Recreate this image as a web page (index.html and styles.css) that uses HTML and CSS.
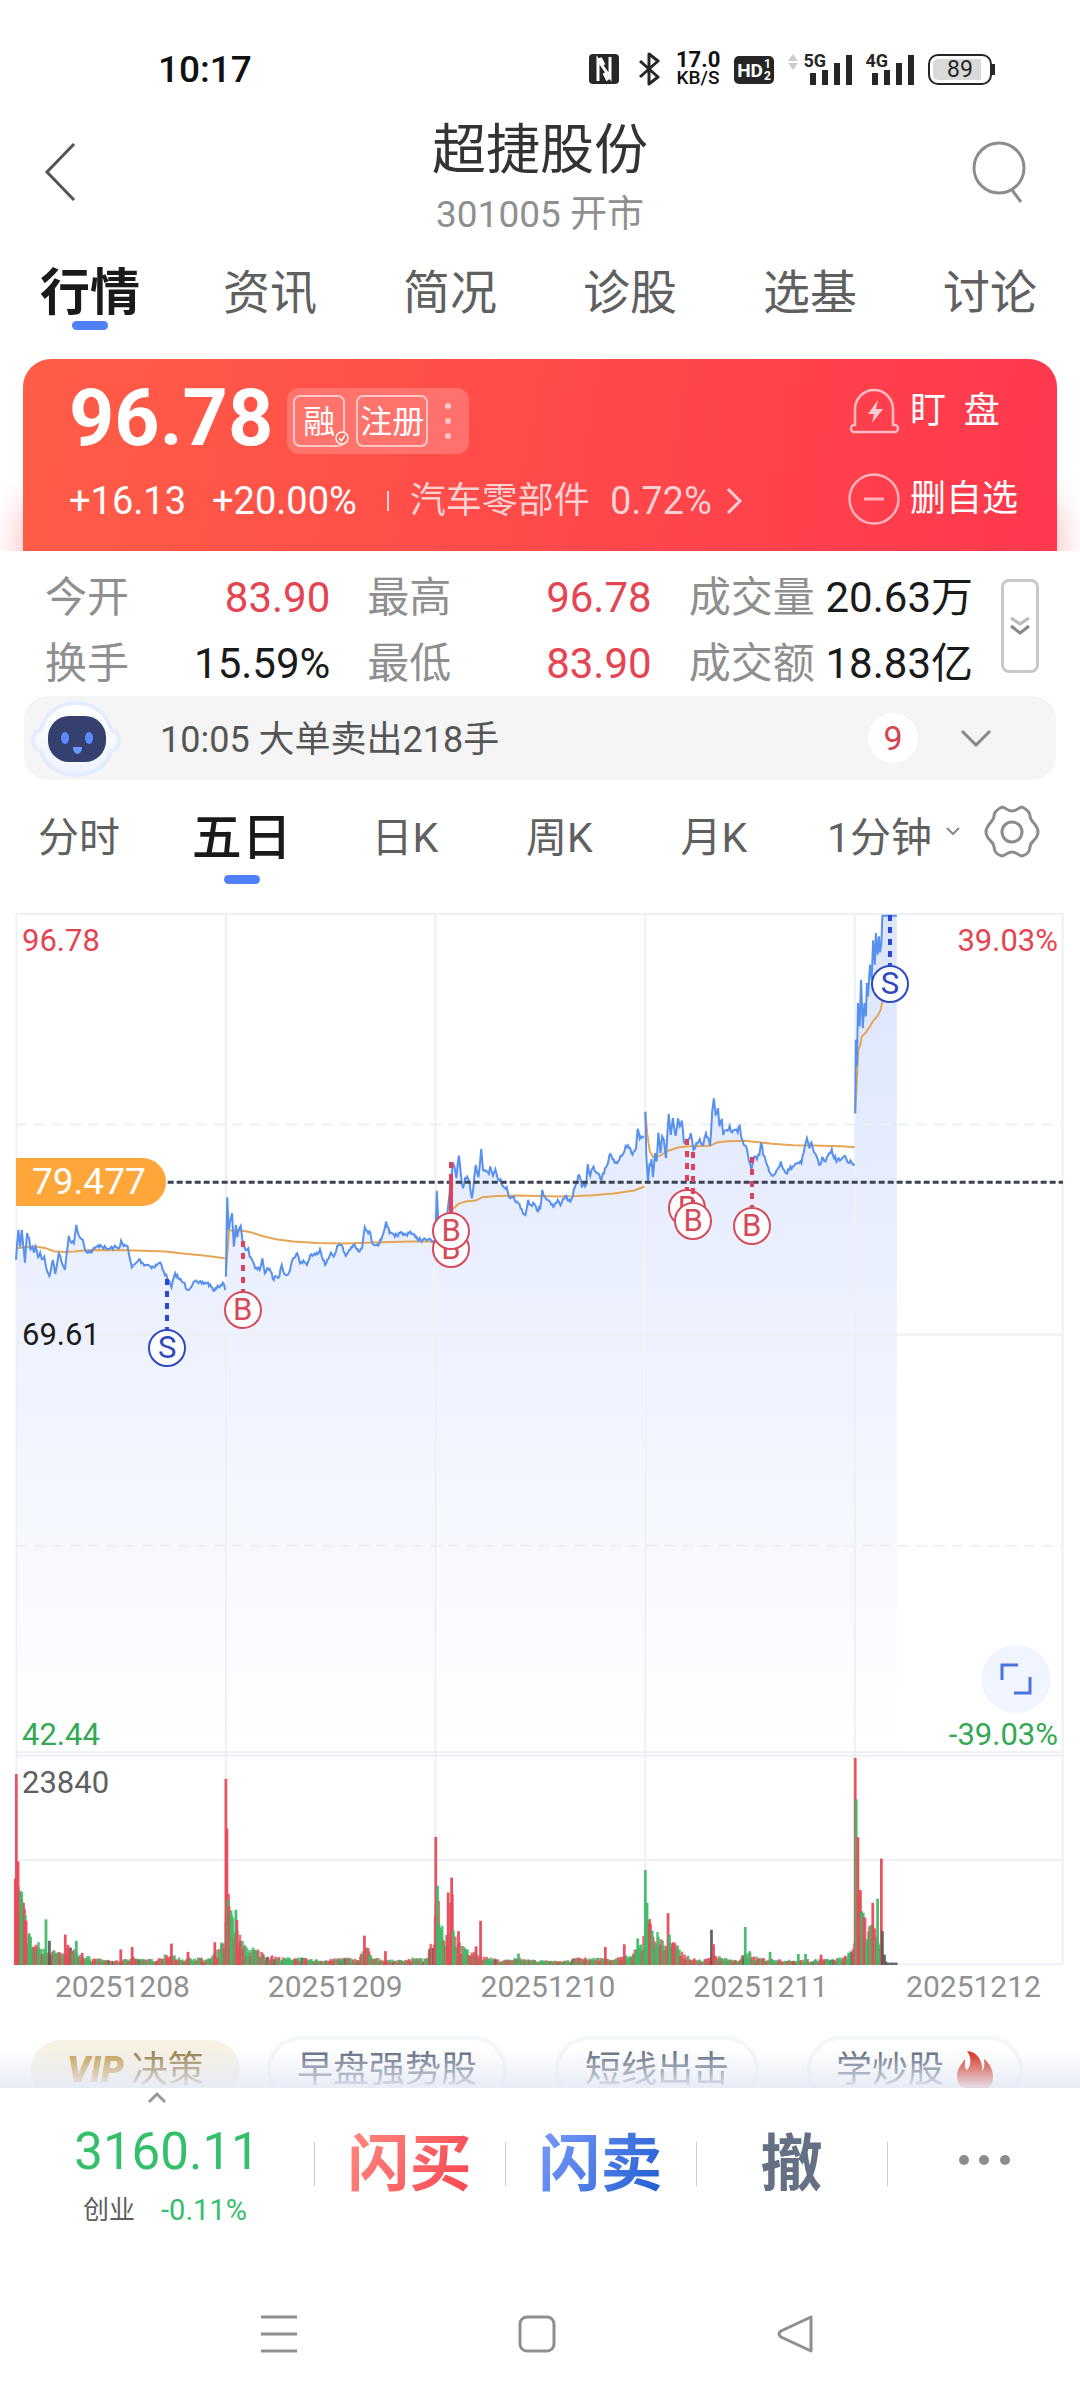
FILE: index.html
```html
<!DOCTYPE html>
<html lang="zh-CN">
<head>
<meta charset="utf-8">
<meta name="viewport" content="width=device-width, initial-scale=1">
<title>超捷股份 301005</title>
<link rel="stylesheet" href="styles.css">
</head>
<body>
<div class="status">
  <time class="status-time">10:17</time>
  <div class="status-icons">
    <svg class="ico-nfc" viewBox="0 0 30 30"><rect width="30" height="30" rx="4" fill="#262626"/><path d="M9 27V6l12 17V3M9 6l3-1 3 6M21 23l-3 2-3-6" fill="none" stroke="#fff" stroke-width="3"/></svg>
    <svg class="ico-bt" viewBox="0 0 22 34"><path d="M2 9l18 16-9 7V2l9 7L2 25" fill="none" stroke="#262626" stroke-width="3" stroke-linejoin="round"/></svg>
    <div class="speed"><b>17.0</b><span>KB/S</span></div>
    <div class="hd">HD<span><i>1</i><i>2</i></span></div>
    <div class="signal"><svg class="updown" viewBox="0 0 10 16"><path d="M0 7l5-7 5 7zM0 9h10l-5 7z" fill="#ccc"/></svg><b>5G</b><svg class="bars" viewBox="0 0 44 32"><path d="M4 20h6v12H4zM16 17h6v15h-6zM28 10h6v22h-6zM40 2h6v30h-6z" fill="#262626"/></svg></div>
    <div class="signal signal-4g"><b>4G</b><svg class="bars" viewBox="0 0 44 32"><path d="M4 20h6v12H4zM16 17h6v15h-6zM28 10h6v22h-6zM40 2h6v30h-6z" fill="#262626"/></svg></div>
    <div class="battery"><span>89</span></div>
  </div>
</div>

<header class="header">
  <button class="icon-btn" aria-label="返回"><svg width="32" height="60" viewBox="0 0 32 60"><path d="M30 2L3 30l27 28" fill="none" stroke="#555" stroke-width="3"/></svg></button>
  <div class="heading"><h1>超捷股份</h1><p>301005 开市</p></div>
  <button class="icon-btn icon-end" aria-label="搜索"><svg width="54" height="64" viewBox="0 0 54 64"><circle cx="27" cy="28" r="25" fill="none" stroke="#8c8c8c" stroke-width="3"/><path d="M40 50l9 12" stroke="#8c8c8c" stroke-width="3"/></svg></button>
</header>

<nav class="tabs">
  <a href="#quote" class="active">行情</a><a href="#news">资讯</a><a href="#brief">简况</a><a href="#diag">诊股</a><a href="#fund">选基</a><a href="#talk">讨论</a>
</nav>

<section class="hero">
  <div class="card">
    <div class="card-main">
      <div class="price-row">
        <strong>96.78</strong>
        <div class="badges"><span class="badge badge-rong">融<svg class="check" viewBox="0 0 14 14"><circle cx="7" cy="7" r="6" fill="#ff6b5e" stroke="#fff" stroke-width="1.500"/><path d="M4 7l2.500 3L10 4" fill="none" stroke="#fff" stroke-width="1.500"/></svg></span><span class="badge">注册</span><svg class="dots" viewBox="0 0 8 38"><g fill="#fff" opacity=".6"><circle cx="4" cy="4" r="3"/><circle cx="4" cy="19" r="3"/><circle cx="4" cy="34" r="3"/></g></svg></div>
      </div>
      <div class="change-row">
        <span>+16.13</span><span>+20.00%</span>
        <a class="sector" href="#sector"><span class="sector-name">汽车零部件</span><span>0.72%</span><svg width="16" height="28" viewBox="0 0 16 28"><path d="M2 2l12 12L2 26" fill="none" stroke="#fff" stroke-width="3"/></svg></a>
      </div>
    </div>
    <div class="card-actions">
      <button><svg width="52" height="48" viewBox="0 0 52 48"><g fill="none" stroke="#fff" stroke-opacity=".65" stroke-width="2.500"><path d="M7 38V22a19 19 0 0 1 38 0v16h3a4 4 0 0 1 0 7H5a4 4 0 0 1 0-7z"/></g><path d="M30 13L20 27h6l-2 9 11-14h-7z" fill="#fff" opacity=".75"/></svg><span>盯&nbsp; 盘</span></button>
      <button><svg width="52" height="52" viewBox="0 0 52 52"><g fill="none" stroke="#fff" stroke-opacity=".6" stroke-width="2.500"><circle cx="26" cy="26" r="24.500"/><path d="M16 26h20" stroke-width="3"/></g></svg><span>删自选</span></button>
    </div>
  </div>
</section>

<section class="stats">
  <dl>
    <div><dt>今开</dt><dd class="up">83.90</dd></div>
    <div><dt>最高</dt><dd class="up">96.78</dd></div>
    <div><dt>成交量</dt><dd>20.63万</dd></div>
    <div><dt>换手</dt><dd>15.59%</dd></div>
    <div><dt>最低</dt><dd class="up">83.90</dd></div>
    <div><dt>成交额</dt><dd>18.83亿</dd></div>
  </dl>
  <button class="expand" aria-label="展开"><svg width="20" height="18" viewBox="0 0 20 18"><g fill="none" stroke-width="3"><path d="M1 1l9 6 9-6" stroke="#bbb"/><path d="M1 9l9 7 9-7" stroke="#888"/></g></svg></button>
</section>

<div class="alert">
  <svg class="robot" viewBox="0 0 92 78"><defs><linearGradient id="rb" x1="0" y1="0" x2="0" y2="1"><stop offset="0" stop-color="#fff"/><stop offset="1" stop-color="#eef3ff"/></linearGradient></defs><path d="M46 1c19 0 32 12 37 28 5 1 8 5 8 11s-3 11-8 12c-5 15-18 25-37 25S14 67 9 52c-5-1-8-6-8-12s3-10 8-11C14 13 27 1 46 1z" fill="#e4edff"/><path d="M46 5c18 0 30 11 34 27 5 0 7 3 7 8s-2 8-7 9c-4 14-16 24-34 24S16 63 12 49c-5-1-7-4-7-9s2-8 7-8C16 16 28 5 46 5z" fill="url(#rb)"/><rect x="18" y="16" width="58" height="46" rx="21" fill="#35406e"/><ellipse cx="35" cy="38" rx="4" ry="6" fill="#5b8cff"/><ellipse cx="59" cy="38" rx="4" ry="6" fill="#5b8cff"/><path d="M43 47h9c0 9-9 9-9 0z" fill="#6b9aff"/></svg>
  <p>10:05 大单卖出218手</p>
  <span class="count">9</span>
  <button aria-label="展开消息"><svg width="32" height="18" viewBox="0 0 32 18"><path d="M2 2l14 14L30 2" fill="none" stroke="#888" stroke-width="3"/></svg></button>
</div>

<nav class="periods">
  <div class="period-list">
    <button>分时</button><button class="active">五日</button><button class="k">日K</button><button class="k">周K</button><button class="k">月K</button>
    <button class="minute">1分钟<svg width="14" height="9" viewBox="0 0 14 9"><path d="M1 1l6 6 6-6" fill="none" stroke="#888" stroke-width="2"/></svg></button>
  </div>
  <button aria-label="设置"><svg width="56" height="56" viewBox="0 0 56 56"><g fill="none" stroke="#8c8c8c" stroke-width="3" stroke-linejoin="round"><path d="M18 3c3 0 5 4 10 4s7-4 10-4c4 2 8 5 8 9 0 6 8 8 8 16s-8 9-8 15c0 5-4 8-8 9-3 0-5-4-10-4s-7 4-10 4c-4-1-8-4-8-9 0-6-8-7-8-15s8-10 8-16c0-4 4-7 8-9z"/><circle cx="28" cy="28" r="10"/></g></svg></button>
</nav>

<main class="chart">
  <div class="plot price-plot">
    <svg id="price" viewBox="46 43 3038 2521" preserveAspectRatio="none">
      <defs><linearGradient id="fill" gradientUnits="userSpaceOnUse" x1="0" y1="43" x2="0" y2="2564"><stop offset="0" stop-color="#4f7cf7" stop-opacity=".2"/><stop offset=".5" stop-color="#4f7cf7" stop-opacity=".1"/><stop offset="1" stop-color="#4f7cf7" stop-opacity="0"/></linearGradient></defs>
      <g class="grid"><path d="M46 43H3084M46 1304H3084M46 2556H3084M47 43V2564M655 43V2564M1263 43V2564M1872 43V2564M2480 43V2564M3083 43V2564"/><path class="dashed" d="M46 674H3084M46 1937H3084"/></g>
      <path class="cost" d="M460 847H3084"/>
    </svg>
    <span class="label top-left up">96.78</span>
    <span class="label top-right up">39.03%</span>
    <span class="label middle">69.61</span>
    <span class="label bottom-left down">42.44</span>
    <span class="label bottom-right down">-39.03%</span>
    <span class="cost-tag">79.477</span>
    <div id="markers"></div>
    <button class="fullscreen" aria-label="全屏"><svg width="34" height="34" viewBox="0 0 34 34"><path d="M3 18V3h16M31 15v16H15" fill="none" stroke="#4d72dc" stroke-width="3"/></svg></button>
  </div>
  <div class="plot volume-plot">
    <svg id="volume" viewBox="46 744 3038 608" preserveAspectRatio="none">
      <path class="grid" d="M46 746H3084M46 1048H3084M46 1350H3084M47 744V1352M655 744V1352M1263 744V1352M1872 744V1352M2480 744V1352M3083 744V1352"/>
    </svg>
    <span class="label volume-max">23840</span>
  </div>
  <div class="dates"><span>20251208</span><span>20251209</span><span>20251210</span><span>20251211</span><span>20251212</span></div>
</main>

<div class="chips">
  <button class="vip"><b>VIP</b> 决策</button>
  <button>早盘强势股</button>
  <button>短线出击</button>
  <button>学炒股<svg width="38" height="40" viewBox="0 0 38 40"><path d="M11 1c12 1 16 12 15 20 2-2 3-6 2-12 5 4 9 10 9 18 0 8-5 13-10 13H11C4 38 1 32 1 26 1 18 6 14 9 9c0 5-1 9 2 11 5-5 4-14 0-19z" fill="#d42410"/></svg></button>
</div>

<footer class="trade">
  <a class="index" href="#index">
    <svg width="20" height="12" viewBox="0 0 20 12"><path d="M2 10l8-8 8 8" fill="none" stroke="#999" stroke-width="3"/></svg>
    <strong>3160.11</strong>
    <span><i>创业</i>-0.11%</span>
  </a>
  <button class="buy"><span>闪买</span></button>
  <button class="sell"><span>闪卖</span></button>
  <button class="cancel"><span>撤</span></button>
  <button class="more" aria-label="更多"><svg width="52" height="12" viewBox="0 0 52 12"><g fill="#8c8c8c"><circle cx="6" cy="6" r="5"/><circle cx="26" cy="6" r="5"/><circle cx="47" cy="6" r="5"/></g></svg></button>
</footer>

<nav class="system">
  <button aria-label="最近任务"><svg width="38" height="38" viewBox="0 0 38 38"><path d="M1 2h36M1 19h36M1 36h36" stroke="#8f8f8f" stroke-width="3"/></svg></button>
  <button aria-label="主页"><svg width="38" height="38" viewBox="0 0 38 38"><rect x="2" y="2" width="34" height="34" rx="7" fill="none" stroke="#8f8f8f" stroke-width="3"/></svg></button>
  <button aria-label="后退"><svg width="38" height="38" viewBox="0 0 38 38"><path d="M35 2v34L5 22q-4-3 0-6z" fill="none" stroke="#8f8f8f" stroke-width="3" stroke-linejoin="round"/></svg></button>
</nav>
<script src="chart.js"></script>
</body>
</html>
```
FILE: styles.css
```css
* { box-sizing: border-box; }
body { margin: 0; background: #fff; color: #1a1a1a; font-family: Roboto, "Noto Sans CJK SC", sans-serif; }
button { border: 0; padding: 0; background: none; color: inherit; font: inherit; }
a { color: inherit; text-decoration: none; }
h1, p, dl, dd { margin: 0; }
i { font-style: normal; }
svg { display: block; flex: none; }

.status { display: flex; justify-content: space-between; align-items: center; height: 50px; margin-top: 44px; padding: 0 88px 0 158px; }
.status-time { font-size: 37px; font-weight: 500; color: #111; }
.status-icons { display: flex; align-items: center; color: #262626; }
.ico-nfc { width: 30px; height: 30px; margin-right: 19px; }
.ico-bt { width: 22px; height: 34px; margin-right: 16px; }
.speed { display: flex; flex-direction: column; width: 44px; margin-right: 14px; color: #111; font-size: 19px; font-weight: 500; line-height: 18px; text-align: center; }
.speed b { font-size: 22px; font-weight: 700; }
.hd { display: flex; align-items: center; justify-content: center; gap: 1px; width: 40px; height: 28px; margin: 2px 14px 0 0; border-radius: 5px; background: #262626; color: #fff; font-size: 19px; font-weight: 700; }
.hd span { display: flex; flex-direction: column; font-size: 12px; line-height: 12px; }
.signal { position: relative; width: 62px; height: 32px; margin-right: 16px; }
.signal-4g { width: 46px; }
.signal b { position: absolute; right: 24px; top: -1px; font-size: 18px; line-height: 18px; font-weight: 700; }
.updown { position: absolute; left: 0; top: 1px; width: 10px; height: 16px; }
.bars { position: absolute; right: 0; top: 0; width: 44px; height: 32px; overflow: visible; }
.battery { position: relative; width: 64px; height: 31px; border: 2px solid #262626; border-radius: 10px; padding: 3px; text-align: center; }
.battery span { display: block; border-radius: 5px; background: linear-gradient(90deg, #d9d9d9 89%, #fff 89%); font-size: 23px; line-height: 21px; }
.battery::after { content: ""; position: absolute; right: -5px; top: 8px; width: 3px; height: 11px; background: #262626; }

.header { display: grid; grid-template-columns: 1fr auto 1fr; align-items: center; padding: 24px 44px 0; }
.icon-btn { padding-bottom: 12px; justify-self: start; }
.icon-end { justify-self: end; margin-right: 10px; }
.heading { text-align: center; }
.heading h1 { font-size: 54px; line-height: 66px; font-weight: 400; color: #333; }
.heading p { margin-top: 8px; font-size: 37px; line-height: 46px; color: #8f8f8f; }

.tabs { display: grid; grid-template-columns: repeat(6, 1fr); padding-top: 18px; text-align: center; }
.tabs a { position: relative; height: 74px; font-size: 47px; line-height: 74px; color: #606060; }
.tabs .active { font-size: 50px; font-weight: 700; color: #1a1a1a; }
.tabs .active::after, .periods .active::after { content: ""; position: absolute; left: calc(50% - 18px); bottom: 0; width: 36px; height: 9px; border-radius: 5px; background: #4f80f7; }

.hero { padding: 29px 23px 0; overflow: hidden; }
.card { display: flex; justify-content: space-between; height: 192px; padding: 20px 39px 0 46px; border-radius: 28px 28px 0 0; background: linear-gradient(100deg, #ff5d47, #ff4a4a 50%, #ff384e); box-shadow: 0 140px 36px rgba(255, 60, 70, .4); color: #fff; }
.price-row { display: flex; align-items: center; gap: 14px; height: 78px; }
.price-row strong { font-size: 79px; line-height: 78px; }
.badges { display: flex; align-items: center; gap: 11px; height: 66px; margin-top: 6px; padding: 0 17px 0 6px; border-radius: 12px; background: rgba(255, 255, 255, .2); }
.badge { position: relative; height: 52px; padding: 0 2px; border: 2px solid rgba(255, 255, 255, .6); border-radius: 7px; font-size: 32px; line-height: 50px; }
.badge-rong { padding: 0 8px; }
.check { position: absolute; right: -6px; bottom: 0; width: 14px; height: 14px; }
.dots { width: 8px; height: 38px; margin-left: 5px; }
.change-row { display: flex; align-items: center; gap: 26px; height: 50px; margin-top: 19px; font-size: 38px; line-height: 50px; }
.sector { display: flex; align-items: center; gap: 20px; margin-left: 4px; opacity: .75; }
.sector-name { font-size: 36px; }
.sector svg { margin-left: -6px; }
.sector::before { content: ""; width: 2px; height: 20px; margin-right: 1px; background: #fff; }
.card-actions { display: flex; flex-direction: column; gap: 36px; }
.card-actions button { display: flex; align-items: center; gap: 10px; font-size: 36px; line-height: 56px; height: 52px; }
.card-actions button:first-child { margin-top: 6px; }

.stats { display: flex; align-items: flex-start; gap: 28px; padding: 15px 41px 0 45px; }
.stats dl { flex: 1; display: grid; grid-template-columns: 285fr 284fr 284fr; column-gap: 37px; row-gap: 2px; font-size: 42px; line-height: 64px; }
.stats dl div { display: flex; justify-content: space-between; white-space: nowrap; }
.stats dt { color: #8f8f8f; }
.up { color: #e54552; }
.down { color: #34a853; }
.expand { display: flex; align-items: center; justify-content: center; width: 38px; height: 94px; margin-top: 13px; border: 3px solid #c9c9c9; border-radius: 8px; }

.alert { display: flex; align-items: center; height: 84px; margin: 0 24px; padding: 0 64px 0 6px; border-radius: 24px; background: #f5f5f5; }
.robot { width: 92px; height: 78px; margin-top: 2px; }
.alert p { flex: 1; margin-left: 38px; padding-top: 4px; font-size: 36px; line-height: 56px; color: #555; }
.count { width: 50px; height: 50px; margin-right: 42px; border-radius: 50%; background: #fff; color: #d9404c; font-size: 34px; line-height: 50px; text-align: center; }

.periods { display: flex; align-items: center; gap: 24px; height: 104px; padding: 0 40px 0 38px; font-size: 41px; color: #606060; }
.period-list { flex: 1; display: flex; justify-content: space-between; }
.period-list button { position: relative; height: 104px; line-height: 116px; }
.period-list .k { padding: 0 8px; }
.periods .active { font-size: 50px; font-weight: 500; color: #1a1a1a; }
.periods .minute { display: flex; gap: 14px; }
.periods .minute svg { margin-top: 47px; }

.chart { margin: 30px 17px 0 16px; }
.plot { position: relative; }
.plot > svg { width: 100%; height: 100%; overflow: visible; }
.price-plot { height: 841px; }
.volume-plot { height: 210px; }
.plot path, .plot polyline { vector-effect: non-scaling-stroke; }
.grid { fill: none; stroke: #edf0f5; stroke-width: 2; }
.dashed { stroke-dasharray: 11 7; }
.cost { stroke: #3a4256; stroke-width: 3; stroke-dasharray: 6 3; }
.line { fill: none; stroke: #5790ee; stroke-width: 2; }
.average { fill: none; stroke: #e6a555; stroke-width: 2; }
.label { position: absolute; font-size: 31px; line-height: 36px; }
.top-left { left: 6px; top: 9px; }
.top-right { right: 5px; top: 9px; }
.middle { left: 6px; top: 403px; }
.bottom-left { left: 6px; bottom: 2px; }
.bottom-right { right: 5px; bottom: 2px; }
.volume-max { left: 6px; top: 10px; color: #606060; }
.cost-tag { position: absolute; left: 0; top: 244px; width: 150px; padding-left: 16px; border-radius: 0 24px 24px 0; background: #ffa63a; color: #fff; font-size: 37px; line-height: 48px; }
.marker { position: absolute; width: 38px; height: 38px; margin: -19px 0 0 -19px; border: 2px solid #d64a5a; border-radius: 50%; background: #fff; color: #d64a5a; font-size: 31px; line-height: 34px; text-align: center; }
.marker::before { content: ""; position: absolute; left: 15px; bottom: 36px; width: 4px; height: 50px; background: repeating-linear-gradient(#e0405a 0 6px, transparent 6px 12px); }
.marker.sell { border-color: #2d48c0; color: #2d48c0; }
.marker.sell::before { background: repeating-linear-gradient(#2d48d0 0 6px, transparent 6px 12px); }
.fullscreen { position: absolute; right: 12px; bottom: 42px; display: flex; align-items: center; justify-content: center; width: 70px; height: 68px; border-radius: 50%; background: #f1f5ff; }
.dates { display: flex; justify-content: space-between; height: 44px; padding: 0 22px 0 39px; color: #919191; font-size: 30px; line-height: 44px; }

.chips { position: relative; display: flex; align-items: flex-start; height: 52px; margin-top: 27px; padding: 0 57px 0 31px; overflow: hidden; }
.chips button { display: flex; align-items: center; justify-content: center; width: 240px; height: 68px; margin-right: 48px; border: 4px solid #f3f6fb; border-radius: 34px; color: #5b6579; font-size: 36px; line-height: 62px; white-space: nowrap; }
.chips button:nth-child(3) { width: 204px; }
.chips button:nth-child(4) { width: 216px; margin-right: 0; gap: 12px; }
.chips .vip { width: 209px; height: 60px; margin: 4px 27px 0 0; gap: 8px; border: 0; background: #f7f1e4; color: #92763e; }
.vip b { color: #c59a4a; font-style: italic; font-weight: 900; }
.chips::after { content: ""; position: absolute; inset: 12px 0 0; background: linear-gradient(rgba(230, 235, 245, 0), rgba(230, 235, 245, .9) 95%); }

.trade { display: grid; grid-template-columns: 314fr 191fr 191fr 191fr 193fr; height: 156px; }
.index { display: flex; flex-direction: column; align-items: center; padding-top: 4px; color: #34c06a; }
.index strong { margin: 18px 0 0 20px; font-size: 51px; line-height: 60px; font-weight: 400; }
.index span { display: flex; gap: 26px; margin: 8px 0 0 16px; font-size: 29px; line-height: 40px; }
.index i { color: #606060; font-size: 26px; }
.trade button { position: relative; display: flex; align-items: center; justify-content: center; height: 154px; font-size: 62px; line-height: 76px; font-weight: 700; }
.trade .more { height: 144px; }
.trade button::before { content: ""; position: absolute; left: 0; top: 54px; width: 1px; height: 44px; background: #ccc; }
.buy span { background: linear-gradient(120deg, #ff8a80, #f8434f); -webkit-background-clip: text; background-clip: text; color: transparent; }
.sell span { background: linear-gradient(120deg, #7d9cfa, #1c5bd0); -webkit-background-clip: text; background-clip: text; color: transparent; }
.cancel { color: #667085; }

.system { display: flex; justify-content: space-between; padding: 71px 266px 44px 260px; }
```
FILE: chart.js
```js
var NS = "http://www.w3.org/2000/svg";
var BASE = 2564, FLOOR = 1352, MINUTE = 2.53;

var seed = 7;
function rand() {
  seed = (seed * 16807) % 2147483647;
  return seed / 2147483647;
}
function add(parent, name, attrs) {
  var el = document.createElementNS(NS, name);
  for (var k in attrs) el.setAttribute(k, attrs[k]);
  parent.appendChild(el);
  return el;
}

// Key prices of each session as x,y pairs; minutes between them get small tick noise.
var sessions = [
  { price: "46,1080 53,990 58,1040 63,990 72,1088 78,1000 84,1015 88,1048 94,1040 98,1058 103,1040 110,1072 116,1058 121,1078 128,1070 134,1105 143,1128 153,1080 160,1122 170,1060 178,1085 188,1110 193,1060 199,1008 207,1028 214,1030 221,975 229,1008 240,1020 246,1048 260,1058 275,1045 290,1035 310,1048 330,1042 345,1045 351,1022 358,1038 370,1040 375,1070 382,1102 395,1088 403,1078 415,1092 430,1095 445,1102 465,1088 475,1115 485,1135 497,1162 508,1120 520,1138 532,1148 545,1170 562,1145 575,1150 600,1148 612,1160 622,1172 634,1160 646,1148 653,1170", avg: "46,1045 70,1042 100,1040 130,1044 155,1054 185,1056 215,1055 260,1050 370,1051 480,1055 530,1061 590,1067 652,1075", n: 4 },
  { price: "655,1130 659,892 663,990 668,960 673,940 678,1040 684,975 688,1012 694,985 698,978 703,1020 712,1050 720,1045 724,1070 732,1082 740,1105 753,1110 761,1075 768,1120 775,1105 785,1115 794,1140 800,1128 810,1130 817,1095 825,1122 838,1118 850,1075 862,1060 870,1090 880,1082 890,1095 900,1065 915,1065 928,1048 943,1095 952,1078 960,1058 968,1070 978,1038 990,1035 1003,1068 1013,1050 1025,1035 1040,1055 1050,1045 1058,982 1068,1000 1074,998 1080,1030 1100,1032 1112,1000 1120,965 1130,1000 1145,1010 1160,1000 1175,1005 1190,995 1205,1012 1220,1020 1240,1020 1260,1025", avg: "655,1120 664,992 700,992 730,998 760,1008 800,1018 850,1025 920,1029 1000,1031 1100,1027 1200,1025 1258,1025", n: 4 },
  { price: "1263,1020 1267,873 1272,980 1280,1010 1295,980 1302,900 1308,860 1313,787 1318,800 1324,835 1331,767 1337,825 1343,865 1349,835 1355,830 1362,848 1369,895 1376,830 1380,795 1388,832 1396,748 1401,810 1412,815 1418,822 1422,800 1430,828 1437,808 1445,840 1452,838 1458,858 1470,862 1480,895 1490,890 1500,905 1510,925 1524,945 1532,900 1540,915 1550,912 1558,932 1567,925 1573,870 1580,890 1590,900 1608,918 1618,900 1626,916 1640,888 1655,905 1668,862 1680,826 1688,860 1700,856 1705,793 1712,828 1722,800 1732,820 1745,840 1755,805 1762,795 1768,765 1780,778 1790,790 1800,768 1808,762 1815,738 1825,745 1835,765 1845,745 1850,687 1856,716 1868,708", avg: "1290,990 1310,930 1330,912 1350,905 1380,902 1400,892 1440,888 1500,887 1560,888 1620,890 1660,889 1720,886 1780,881 1840,872 1870,860", n: 5 },
  { price: "1872,636 1875,770 1880,850 1884,790 1887,800 1890,778 1894,832 1900,760 1905,785 1910,698 1916,760 1921,710 1926,720 1932,775 1940,643 1946,705 1952,655 1960,708 1967,656 1972,680 1978,662 1984,728 1992,720 1998,718 2004,700 2012,750 2020,730 2030,718 2040,735 2048,700 2060,738 2066,636 2071,596 2076,645 2083,625 2087,680 2094,660 2098,705 2108,690 2117,678 2124,698 2132,690 2140,698 2146,678 2150,710 2158,735 2164,738 2172,780 2180,808 2188,770 2196,778 2203,765 2208,728 2214,765 2222,785 2235,820 2243,828 2256,808 2265,785 2280,820 2290,810 2300,800 2310,790 2325,790 2332,758 2341,715 2348,745 2354,728 2362,758 2376,795 2388,775 2395,785 2405,760 2413,748 2420,775 2430,780 2440,780 2448,770 2458,785 2470,786 2479,792", avg: "1872,636 1878,705 1885,755 1895,772 1915,768 1940,752 1970,742 2000,739 2060,738 2080,728 2110,724 2160,723 2200,727 2240,732 2300,736 2360,737 2440,739 2480,742", n: 5 },
  { price: "2481,640 2483,420 2486,500 2489,310 2494,380 2498,240 2503,385 2508,310 2512,350 2515,250 2518,290 2524,195 2529,240 2533,122 2538,195 2541,100 2546,165 2550,110 2553,158 2557,130 2560,48 2602,48", avg: "2481,640 2486,540 2490,450 2496,435 2500,410 2512,398 2524,380 2532,365 2545,350 2555,330 2560,305", n: 0 }
];
function parse(s) {
  return s.split(" ").map(function (p) { return p.split(",").map(Number); });
}
var price = document.getElementById("price");
var grid = price.querySelector(".grid");
sessions.forEach(function (s) {
  var keys = parse(s.price), pts = [];
  keys.forEach(function (p, i) {
    pts.push(p);
    var q = keys[i + 1];
    if (!q || !s.n) return;
    var steps = Math.floor((q[0] - p[0]) / 3);
    for (var j = 1; j < steps; j++) {
      var t = j / steps;
      pts.push([p[0] + (q[0] - p[0]) * t, p[1] + (q[1] - p[1]) * t + (rand() - .5) * s.n * 3]);
    }
  });
  var str = pts.map(function (p) { return p[0].toFixed(1) + "," + p[1].toFixed(1); }).join(" ");
  var area = add(price, "polygon", { points: str + " " + pts[pts.length - 1][0] + "," + BASE + " " + pts[0][0] + "," + BASE, fill: "url(#fill)" });
  price.insertBefore(area, grid);
  var cost = price.querySelector(".cost");
  price.insertBefore(add(price, "polyline", { points: s.avg, "class": "average" }), cost);
  price.insertBefore(add(price, "polyline", { points: str, "class": "line" }), cost);
});

// Trade marks: side, x, y of the circle centre in plot units.
[["sell", 485, 1345], ["buy", 704, 1230], ["buy", 1308, 1046], ["buy", 1309, 992], ["buy", 1994, 923], ["buy", 2011, 962], ["buy", 2181, 979], ["sell", 2582, 254]].forEach(function (m) {
  var el = document.createElement("span");
  el.className = "marker " + m[0];
  el.textContent = m[0] === "buy" ? "B" : "S";
  el.style.left = (m[1] - 46) / 30.38 + "%";
  el.style.top = (m[2] - 43) / 25.21 + "%";
  document.getElementById("markers").appendChild(el);
});

// Volume envelope (x, height) and the single tall bars (x, height, colour).
var COLORS = { r: "#e84a58", g: "#40b968", k: "#5c5c5c" };
var envelope = parse("46,200 60,190 75,110 90,60 110,55 125,40 150,45 165,30 185,30 195,50 210,40 235,25 260,20 290,14 350,10 380,25 400,15 450,14 480,28 500,25 530,12 560,22 600,14 625,35 650,70 660,180 675,110 690,80 710,45 740,42 770,26 820,18 860,20 900,14 960,14 990,20 1040,14 1058,60 1075,20 1110,14 1150,12 1200,18 1235,15 1255,70 1265,200 1280,110 1295,90 1320,80 1340,45 1365,35 1400,22 1450,12 1500,18 1560,12 1600,10 1640,10 1670,18 1720,18 1750,18 1800,20 1830,25 1860,60 1875,130 1890,95 1915,70 1935,55 1950,60 1975,35 2000,18 2040,12 2065,25 2090,20 2130,12 2170,32 2190,20 2250,14 2300,12 2340,14 2420,15 2450,22 2475,50 2485,170 2500,140 2515,95 2530,100 2545,60 2558,60 2561,50");
for (var i = 0, x = 46; x < 2558; x += MINUTE) {
  while (envelope[i + 1] && envelope[i + 1][0] < x) i++;
  var a = envelope[i], b = envelope[i + 1];
  var h = a[1] + (b[1] - a[1]) * (x - a[0]) / (b[0] - a[0]);
  var r = rand(), hh = Math.max(7, h * (.5 + rand() * .75));
  bar(x, hh, r < .47 ? "r" : r < .97 ? "g" : "k", .8);
}
function bar(x, h, c, o) {
  add(document.getElementById("volume"), "rect", { x: (x - 2).toFixed(1), y: (FLOOR - h).toFixed(1), width: 8, height: h.toFixed(1), fill: COLORS[c], "fill-opacity": o });
}
"42,250,r 50,300,r 45,553,r 60,212,g 70,130,r 82,92,g 131,132,g 141,70,k 187,88,r 195,58,r 219,70,g 236,35,r 348,45,r 381,52,r 495,62,r 543,38,r 621,66,r 640,60,g 656,395,r 653,539,r 659,188,g 662,170,r 668,158,g 682,160,g 685,130,r 694,70,r 1055,85,r 1116,40,r 1262,371,r 1267,230,g 1271,120,g 1276,108,g 1298,210,r 1305,180,r 1310,205,r 1308,253,r 1313,100,g 1328,98,r 1379,54,r 1392,128,r 1502,33,g 1754,52,r 1809,60,r 1848,77,g 1870,275,g 1875,180,g 1873,128,g 1882,120,r 1890,100,g 1936,150,r 1940,88,g 1950,65,r 2062,102,k 2068,60,r 2160,110,g 2173,40,g 2232,38,g 2314,32,g 2335,32,g 2380,30,r 2479,600,r 2482,480,g 2487,370,r 2494,217,r 2498,155,g 2504,138,r 2524,115,g 2530,180,r 2544,192,g 2555,308,r 2558,98,k 2564,30,k 2568,10,k 2574,7,k 2582,7,k 2590,7,k 2598,7,k".split(" ").forEach(function (s) {
  var p = s.split(",");
  bar(+p[0], +p[1], p[2], .95);
});
```
